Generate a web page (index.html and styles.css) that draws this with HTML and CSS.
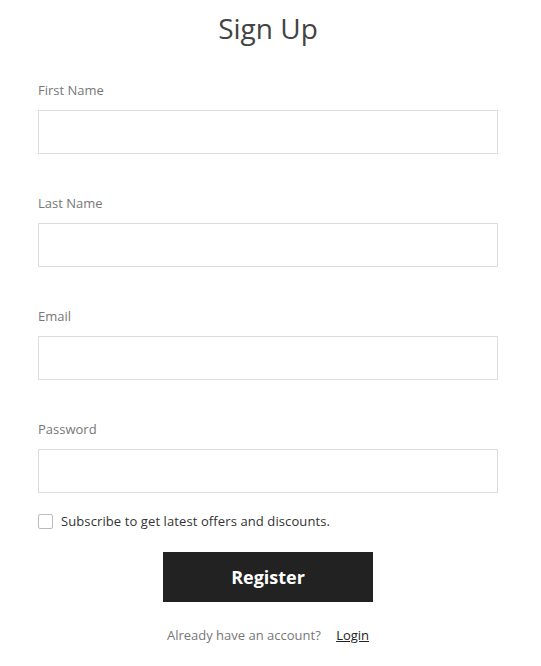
FILE: index.html
```html
<!DOCTYPE html>
<html lang="en">
<head>
    <meta charset="UTF-8">
    <meta name="viewport" content="width=device-width, initial-scale=1.0">
    <title>Sign Up</title>
    <link rel="stylesheet" href="styles.css">
</head>
<body>
    <div class="signup">
        <h1 class="title">Sign Up</h1>
        <form class="form">
            <div class="field">
                <label for="fname">First Name</label>
                <input type="text" id="fname">
            </div>
            <div class="field">
                <label for="lname">Last Name</label>
                <input type="text" id="lname">
            </div>
            <div class="field">
                <label for="email">Email</label>
                <input type="email" id="email">
            </div>
            <div class="field">
                <label for="pass">Password</label>
                <input type="password" id="pass">
            </div>
            <label class="check">
                <span class="box"></span>
                Subscribe to get latest offers and discounts.
            </label>
            <button type="button" class="btn">Register</button>
            <p class="foot">Already have an account? <a href="#">Login</a></p>
        </form>
    </div>
</body>
</html>
```
FILE: styles.css
```css
*{
    margin: 0;
    padding: 0;
    box-sizing: border-box;
}
body{
    font-family: "Segoe UI", "Open Sans", sans-serif;
    background: #fff;
    color: #444;
}
.signup{
    width: 460px;
    margin-left: 38px;
    padding-top: 9px;
}
.title{
    font-size: 28px;
    font-weight: normal;
    text-align: center;
    line-height: 38px;
    color: #444;
}
.form{
    display: flex;
    flex-direction: column;
    padding-top: 34px;
}
.field{
    display: flex;
    flex-direction: column;
    margin-bottom: 40px;
}
.field label{
    font-size: 13px;
    line-height: 18px;
    color: #777;
    margin-bottom: 11px;
}
.field input{
    height: 44px;
    border: 1px solid #ddd;
    outline: none;
    padding: 0 12px;
    font-size: 14px;
}
.field:last-of-type{
    margin-bottom: 19px;
}
.check{
    display: flex;
    align-items: center;
    gap: 8px;
    font-size: 13px;
    letter-spacing: 0.1px;
    color: #333;
}
.box{
    width: 15px;
    height: 15px;
    border: 1px solid #bbb;
    border-radius: 2px;
}
.btn{
    align-self: center;
    width: 210px;
    height: 50px;
    margin-top: 22px;
    border: none;
    background: #222;
    color: #fff;
    font-family: inherit;
    font-size: 18px;
    font-weight: bold;
}
.foot{
    text-align: center;
    font-size: 13px;
    color: #777;
    margin-top: 24px;
}
.foot a{
    color: #222;
    margin-left: 12px;
}
```
